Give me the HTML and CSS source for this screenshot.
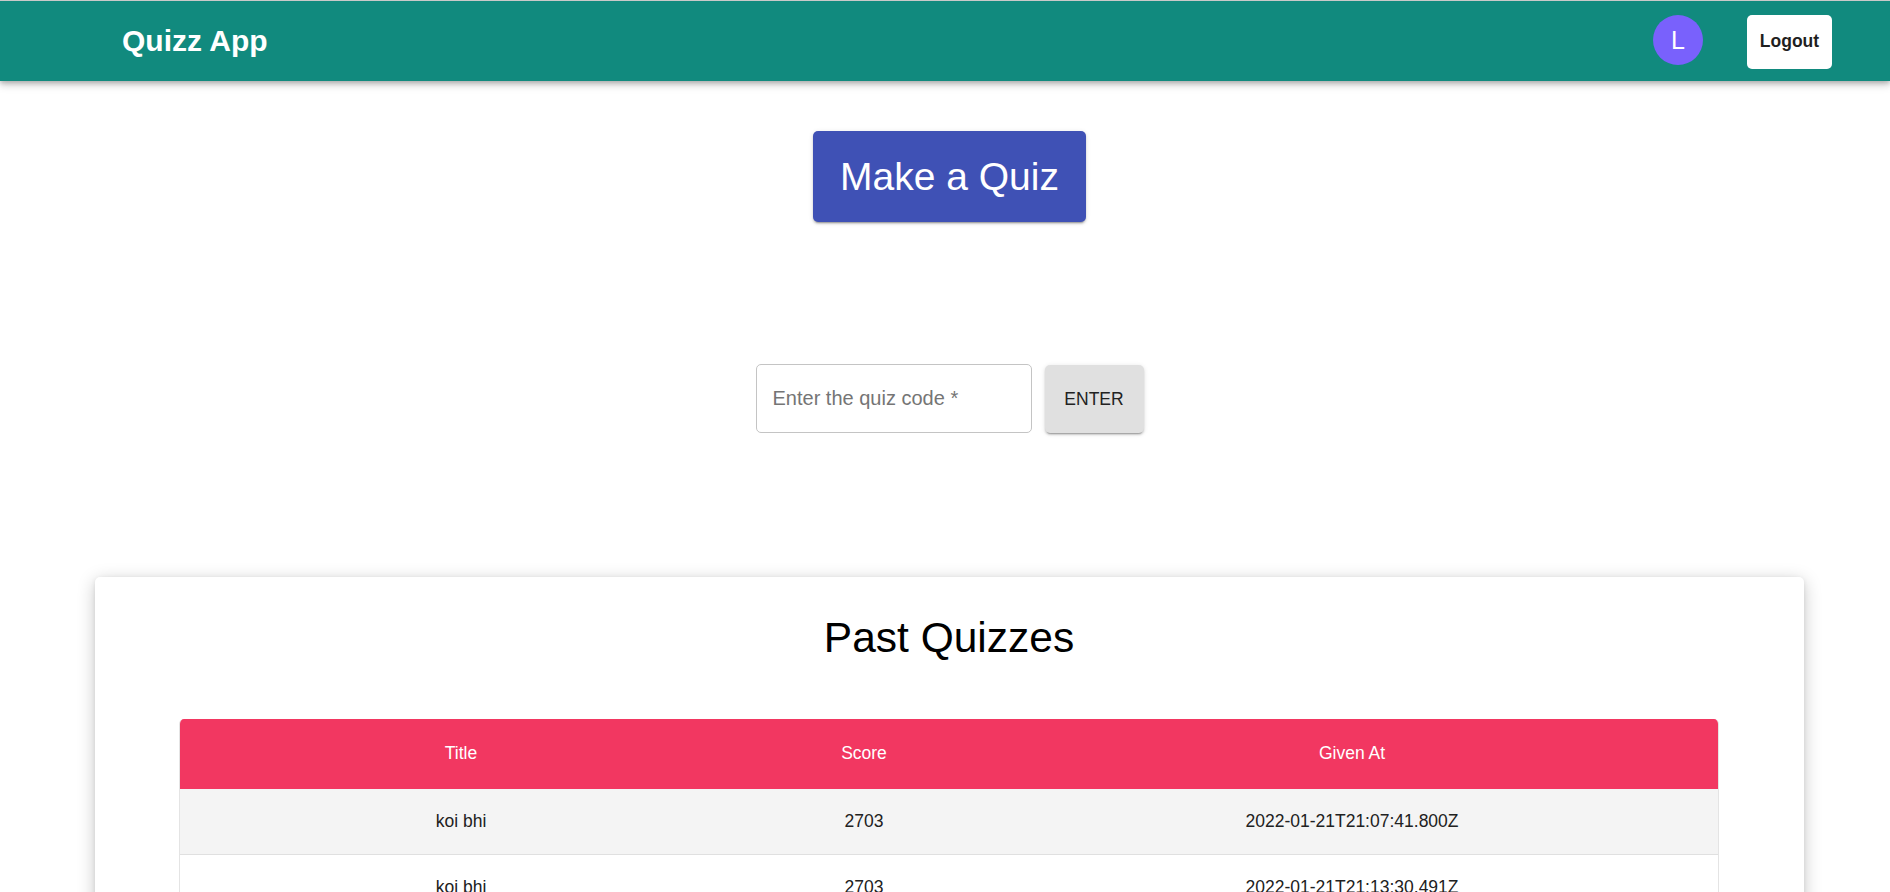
FILE: index.html
```html
<!DOCTYPE html>
<html lang="en">
<head>
<meta charset="utf-8">
<title>Quizz App</title>
<link rel="stylesheet" href="styles.css">
</head>
<body>
<header class="appbar">
  <div class="brand">Quizz App</div>
  <div class="appbar-right">
    <div class="avatar">L</div>
    <button class="logout">Logout</button>
  </div>
</header>
<main class="main">
  <button class="make-quiz">Make a Quiz</button>
  <div class="code-row">
    <div class="code-input"><span class="placeholder">Enter the quiz code *</span></div>
    <button class="enter-btn">ENTER</button>
  </div>
  <section class="card">
    <h2 class="card-title">Past Quizzes</h2>
    <div class="table-wrap">
      <table class="quiz-table">
        <colgroup>
          <col class="col-title">
          <col class="col-score">
          <col class="col-date">
        </colgroup>
        <thead>
          <tr><th>Title</th><th>Score</th><th>Given At</th></tr>
        </thead>
        <tbody>
          <tr class="odd"><td>koi bhi</td><td>2703</td><td>2022-01-21T21:07:41.800Z</td></tr>
          <tr><td>koi bhi</td><td>2703</td><td>2022-01-21T21:13:30.491Z</td></tr>
        </tbody>
      </table>
    </div>
  </section>
</main>
</body>
</html>
```
FILE: styles.css
```css
* { box-sizing: border-box; }
html, body { margin: 0; padding: 0; background: #fff; }
body {
  font-family: "Liberation Sans", Arial, sans-serif;
  color: #212121;
}
.appbar {
  height: 81px;
  background: #118a7e;
  border-top: 1px solid #c9c9c9;
  box-shadow: 0 2px 5px rgba(0,0,0,0.25), 0 5px 8px rgba(0,0,0,0.12);
  display: flex;
  align-items: center;
  justify-content: space-between;
  padding: 0 58px 0 122px;
  position: relative;
  z-index: 2;
}
.brand {
  color: #fff;
  font-weight: bold;
  font-size: 30px;
}
.appbar-right {
  display: flex;
  align-items: center;
  gap: 44px;
}
.avatar {
  width: 50px;
  height: 50px;
  border-radius: 50%;
  background: #7961fc;
  color: #fff;
  font-size: 25px;
  display: flex;
  align-items: center;
  justify-content: center;
  margin-top: -2px;
}
.logout {
  width: 85px;
  height: 54px;
  background: #fff;
  border: none;
  border-radius: 5px;
  font-family: inherit;
  font-weight: bold;
  font-size: 17.5px;
  color: #1f1f1f;
  padding: 0;
  margin-top: 1px;
}
.main {
  display: flex;
  flex-direction: column;
  align-items: center;
  padding-left: 9px;
  padding-bottom: 40px;
}
.make-quiz {
  margin-top: 50px;
  width: 273px;
  height: 91px;
  background: #3f51b5;
  color: #fff;
  border: none;
  border-radius: 5px;
  font-family: inherit;
  font-size: 39px;
  padding: 0;
  box-shadow: 0 3px 1px -2px rgba(0,0,0,0.2), 0 2px 2px rgba(0,0,0,0.14), 0 1px 5px rgba(0,0,0,0.12);
}
.code-row {
  margin-top: 142px;
  display: flex;
  align-items: flex-start;
  gap: 13px;
}
.code-input {
  width: 276px;
  height: 69px;
  border: 1px solid #c4c4c4;
  border-radius: 5px;
  display: flex;
  align-items: center;
  padding-left: 16px;
}
.placeholder {
  color: #757575;
  font-size: 20px;
}
.enter-btn {
  width: 99px;
  height: 68px;
  margin-top: 1px;
  background: #e0e0e0;
  border: none;
  border-radius: 5px;
  font-family: inherit;
  font-size: 17.5px;
  color: #222;
  padding: 0;
  box-shadow: 0 3px 1px -2px rgba(0,0,0,0.2), 0 2px 2px rgba(0,0,0,0.14), 0 1px 5px rgba(0,0,0,0.12);
}
.card {
  margin-top: 144px;
  width: 1709px;
  background: #fff;
  border-radius: 5px;
  box-shadow: 0 4px 18px rgba(0,0,0,0.22), 0 1px 4px rgba(0,0,0,0.08);
  padding: 35px 85px 60px 84px;
}
.card-title {
  margin: 0 0 54px;
  text-align: center;
  font-weight: normal;
  font-size: 42.5px;
  line-height: 52.5px;
  color: #000;
}
.table-wrap {
  border-radius: 5px 5px 0 0;
  overflow: hidden;
  border-left: 1px solid #e4e4e4;
  border-right: 1px solid #e4e4e4;
}
.quiz-table {
  width: 100%;
  border-collapse: collapse;
  table-layout: fixed;
  font-size: 17.5px;
}
.col-title { width: 562px; }
.col-score { width: 244px; }
.quiz-table th {
  height: 70px;
  background: #f23761;
  color: #fff;
  font-weight: normal;
  text-align: center;
  padding: 0;
}
.quiz-table td {
  height: 66px;
  text-align: center;
  padding: 0;
  border-bottom: 1px solid #e0e0e0;
  color: #212121;
}
.quiz-table tr.odd td { background: #f4f4f4; }
```
